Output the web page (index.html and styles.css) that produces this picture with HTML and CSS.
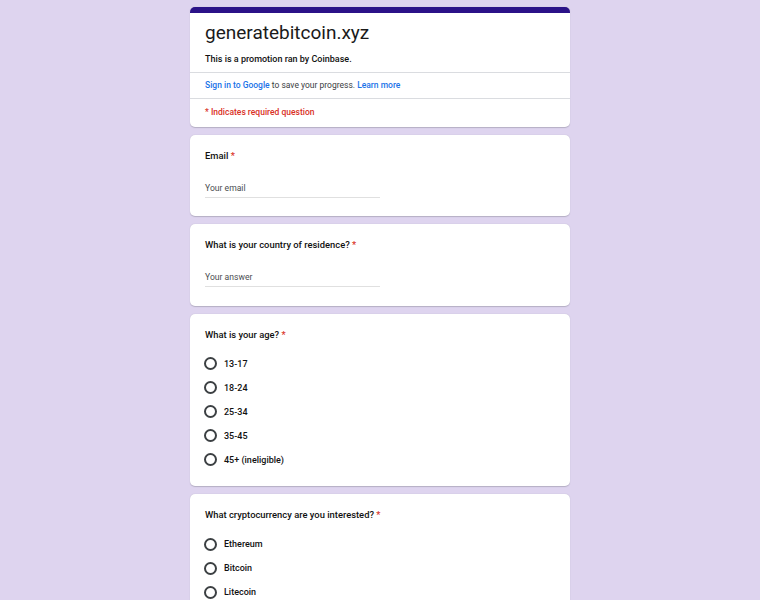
FILE: index.html
```html
<!DOCTYPE html>
<html lang="en">
<head>
<meta charset="utf-8">
<title>generatebitcoin.xyz</title>
<link rel="stylesheet" href="styles.css">
</head>
<body>
<main class="form">
  <section class="card header-card">
    <div class="header-main">
      <h1 class="title">generatebitcoin.xyz</h1>
      <p class="desc">This is a promotion ran by Coinbase.</p>
    </div>
    <div class="signin"><a class="link" href="#">Sign in to Google</a> to save your progress. <a class="link" href="#">Learn more</a></div>
    <div class="required">* Indicates required question</div>
  </section>

  <section class="card">
    <div class="question">Email <span class="star">*</span></div>
    <div class="input">Your email</div>
  </section>

  <section class="card">
    <div class="question">What is your country of residence? <span class="star">*</span></div>
    <div class="input">Your answer</div>
  </section>

  <section class="card">
    <div class="question">What is your age? <span class="star">*</span></div>
    <ul class="options">
      <li class="option"><span class="radio"></span>13-17</li>
      <li class="option"><span class="radio"></span>18-24</li>
      <li class="option"><span class="radio"></span>25-34</li>
      <li class="option"><span class="radio"></span>35-45</li>
      <li class="option"><span class="radio"></span>45+ (ineligible)</li>
    </ul>
  </section>

  <section class="card">
    <div class="question">What cryptocurrency are you interested? <span class="star">*</span></div>
    <ul class="options">
      <li class="option"><span class="radio"></span>Ethereum</li>
      <li class="option"><span class="radio"></span>Bitcoin</li>
      <li class="option"><span class="radio"></span>Litecoin</li>
      <li class="option"><span class="radio"></span>Dogecoin</li>
    </ul>
  </section>
</main>
</body>
</html>
```
FILE: styles.css
```css
html, body {
  margin: 0;
  padding: 0;
}
body {
  background: #ded4ef;
  font-family: Roboto, "Liberation Sans", Arial, sans-serif;
  color: #202124;
}
.form {
  width: 380px;
  margin: 0 auto;
  padding-top: 7px;
  display: flex;
  flex-direction: column;
  gap: 8px;
}
.card {
  background: #fff;
  border-radius: 5px;
  padding: 14px 15px 14.4px;
  box-shadow: 0 0.5px 1px rgba(60, 64, 67, 0.25);
}
.header-card {
  padding: 0;
  border-top: 6px solid #2b1288;
}
.header-main {
  padding: 7px 15px 6px;
  border-bottom: 1px solid #dadce0;
}
.title {
  margin: 0;
  font-size: 19px;
  line-height: 26px;
  font-weight: 400;
  color: #1a1a1a;
}
.desc {
  margin: 6px 0 0;
  font-size: 9px;
  line-height: 14px;
  font-weight: 500;
  color: #111;
}
.signin {
  padding: 0 15px;
  height: 25px;
  line-height: 25px;
  font-size: 8.5px;
  color: #3c4043;
  border-bottom: 1px solid #dadce0;
}
.link {
  color: #1a73e8;
  font-weight: 500;
  text-decoration: none;
}
.required {
  padding: 6px 15px 8px;
  line-height: 14px;
  font-size: 8.5px;
  font-weight: 500;
  color: #d93025;
}
.question {
  font-size: 9.4px;
  line-height: 14px;
  font-weight: 500;
  color: #111;
}
.star {
  color: #d93025;
}
.input {
  margin-top: 18px;
  width: 175px;
  font-size: 8.6px;
  line-height: 14px;
  color: #4a4d51;
  padding-bottom: 2px;
  border-bottom: 1px solid #e0e0e0;
  margin-bottom: 4px;
}
.options {
  list-style: none;
  margin: 10px 0 0;
  padding: 0;
}
.option {
  display: flex;
  align-items: center;
  height: 24px;
  font-size: 9px;
  font-weight: 500;
  color: #111;
}
.radio {
  box-sizing: border-box;
  width: 13px;
  height: 13px;
  margin-left: -1px;
  margin-right: 7px;
  border: 2px solid #3c4043;
  border-radius: 50%;
  flex: none;
}
```
